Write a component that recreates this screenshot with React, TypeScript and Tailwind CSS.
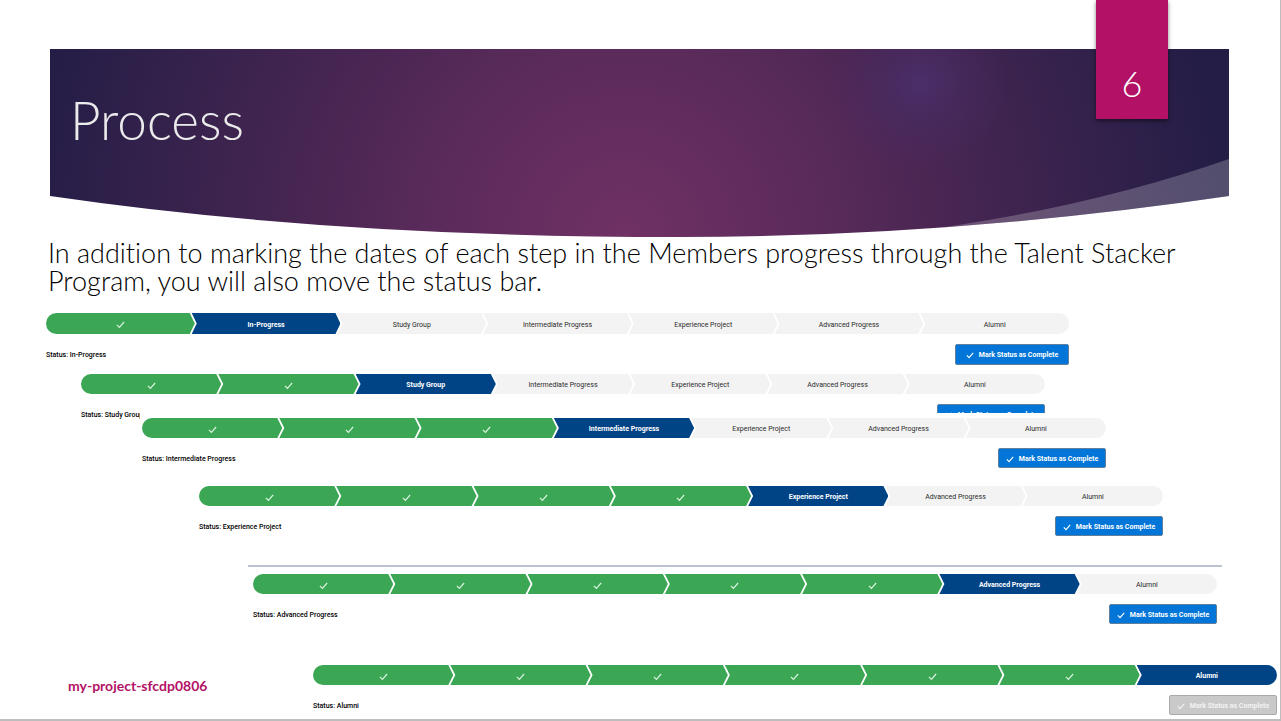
import React from "react";

const STAGES = [
  "Not Started",
  "In-Progress",
  "Study Group",
  "Intermediate Progress",
  "Experience Project",
  "Advanced Progress",
  "Alumni",
];

function Check({ className }: { className: string }) {
  return (
    <svg viewBox="0 0 10 10" className={`shrink-0 ${className}`} fill="none" stroke="currentColor" strokeWidth="1.4" aria-hidden="true">
      <path d="M1 5.4 L3.8 8.2 L9 2.2" />
    </svg>
  );
}

function stageColor(index: number, current: number) {
  if (index < current) return "bg-[#3ba755] text-[#d5f0dc]";
  if (index === current) return "bg-[#014486] text-white font-bold";
  return "bg-[#f3f3f3] text-[#2a2a2a]";
}

function stageShape(index: number) {
  if (index === 0) return "[clip-path:polygon(0_0,calc(100%-5px)_0,100%_50%,calc(100%-5px)_100%,0_100%)]";
  if (index === STAGES.length - 1) return "-ml-[3px] [clip-path:polygon(0_0,100%_0,100%_100%,0_100%,5px_50%)]";
  return "-ml-[3px] [clip-path:polygon(0_0,calc(100%-5px)_0,100%_50%,calc(100%-5px)_100%,0_100%,5px_50%)]";
}

function StatusPath({ current, large = false, className = "" }: { current: number; large?: boolean; className?: string }) {
  const done = current === STAGES.length - 1;
  return (
    <section className={`font-[Roboto,sans-serif] text-[7px] leading-[10px] ${className}`}>
      <ol className={`flex overflow-hidden rounded-full ${large ? "h-[21px]" : "h-5"}`}>
        {STAGES.map((stage, i) => (
          <li
            key={stage}
            className={`flex min-w-0 flex-1 items-center justify-center pt-[2px] whitespace-nowrap ${stageColor(i, current)} ${stageShape(i)}`}
          >
            {i < current ? <Check className="size-[9px]" /> : stage}
          </li>
        ))}
      </ol>
      <div className="mt-[10px] flex items-center justify-between">
        <p className="pt-px font-medium text-black">Status: {STAGES[current]}</p>
        <button
          type="button"
          disabled={done}
          className={`flex items-center justify-center gap-[5px] rounded-[2px] border pt-px font-bold whitespace-nowrap ${
            large ? "h-[21px] w-[114px]" : "h-5 w-[108px]"
          } ${done ? "border-[#a9a9a9] bg-[#c9c9c9] text-[#f3f3f3]" : "border-[#5f7f9c] bg-[#0176d8] text-white"}`}
        >
          <Check className="size-[8px]" />
          Mark Status as Complete
        </button>
      </div>
    </section>
  );
}

function BannerArt() {
  return (
    <svg className="absolute inset-0 size-full" viewBox="0 0 1179 188" preserveAspectRatio="none" aria-hidden="true">
      <defs>
        <radialGradient id="base" gradientUnits="userSpaceOnUse" cx="575" cy="188" r="620">
          <stop offset="0" stopColor="#703164" />
          <stop offset="0.3" stopColor="#5b2b5b" />
          <stop offset="0.5" stopColor="#4a2653" />
          <stop offset="0.75" stopColor="#35224c" />
          <stop offset="0.97" stopColor="#241d46" />
        </radialGradient>
        <radialGradient id="glow" gradientUnits="userSpaceOnUse" cx="870" cy="34" r="88">
          <stop offset="0" stopColor="#4c2f6c" stopOpacity="0.9" />
          <stop offset="0.5" stopColor="#482b62" stopOpacity="0.55" />
          <stop offset="1" stopColor="#482b62" stopOpacity="0" />
        </radialGradient>
        <clipPath id="wave">
          <path d="M0 0 H1179 V147 Q900 188 630 188 Q280 188 0 147 Z" />
        </clipPath>
      </defs>
      <g clipPath="url(#wave)">
        <rect width="1179" height="188" fill="url(#base)" />
        <rect width="1179" height="188" fill="url(#glow)" />
        <path d="M1179 110 Q1030 162 850 184 L850 188 H1179 Z" fill="#fff" fillOpacity="0.22" />
      </g>
    </svg>
  );
}

export default function App() {
  return (
    <main className="flex min-h-screen flex-col border-r border-b-2 border-[#bdbdbd] bg-white font-['Lato',sans-serif] [font-variant-ligatures:none]">
      <header className="relative mt-[49px] mr-[51px] ml-[50px] h-[188px]">
        <BannerArt />
        <h1 className="relative pt-[41px] pl-[20px] text-[53px] leading-[60px] font-light text-[#ebebeb]">Process</h1>
        <div className="absolute -top-[49px] right-[61px] flex h-[119px] w-[72px] items-end justify-center bg-[#b31166] pb-[14px] text-[36px] leading-[44px] font-light text-white shadow-[0_2px_4px_rgba(0,0,0,0.5)]">
          6
        </div>
      </header>

      <p className="mt-[2px] mr-[60px] ml-[48px] text-[27px] leading-[28px] font-light text-black">
        In addition to marking the dates of each step in the Members progress through the Talent Stacker Program, you
        will also move the status bar.
      </p>

      <StatusPath current={1} large className="mt-[18px] mr-[211px] ml-[46px]" />
      <StatusPath current={2} className="mt-[9px] mr-[235px] ml-[81px]" />
      <StatusPath current={3} className="relative -mt-[11px] mr-[174px] ml-[140px] bg-white pt-[5px] pl-[2px]" />
      <StatusPath current={4} className="mt-[18px] mr-[117px] ml-[199px]" />
      <hr className="mt-[29px] mr-[58px] ml-[248px] border-t-2 border-[#bcc2cf]" />
      <StatusPath current={5} className="mt-[7px] mr-[63px] ml-[253px]" />

      <div className="mt-[41px] mr-[3px] mb-[4px] flex">
        <footer className="w-[313px] shrink-0 pt-[11px] pl-[68px] text-[14px] leading-[20px] font-bold text-[#b31166]">
          my-project-sfcdp0806
        </footer>
        <StatusPath current={6} className="flex-1" />
      </div>
    </main>
  );
}
